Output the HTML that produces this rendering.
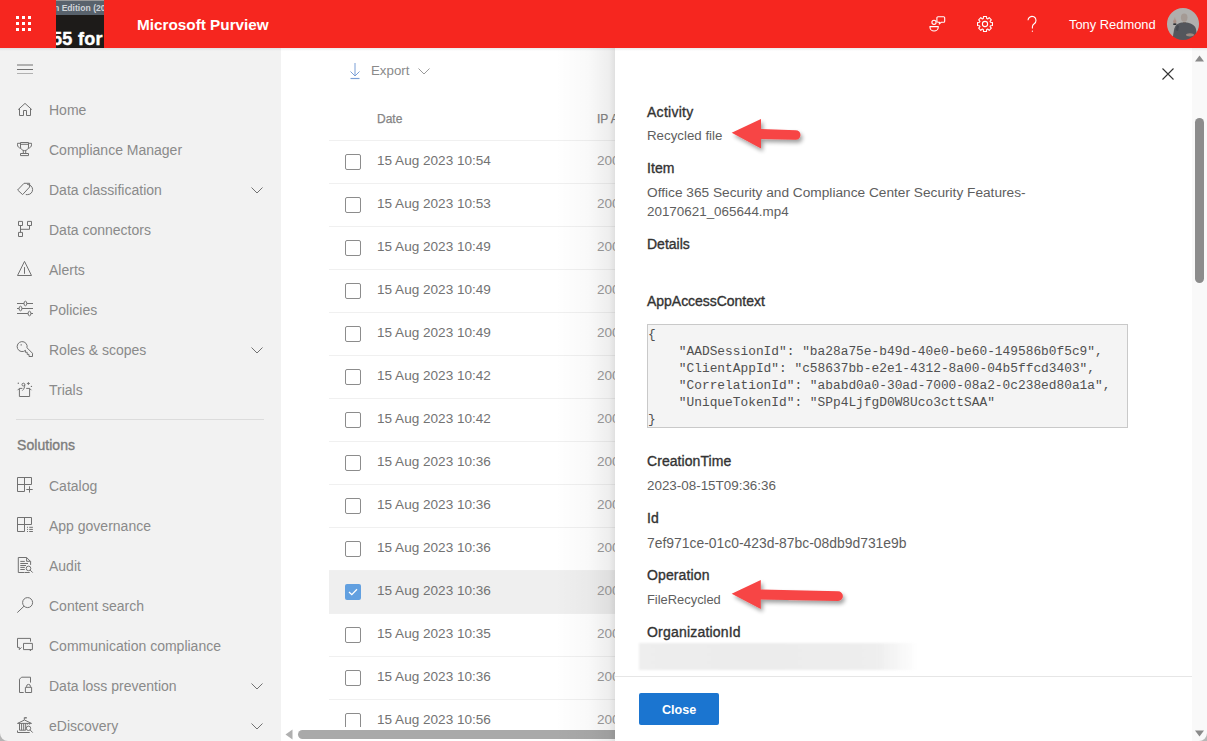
<!DOCTYPE html>
<html><head><meta charset="utf-8">
<style>
*{box-sizing:border-box;margin:0;padding:0}
html,body{width:1207px;height:741px;overflow:hidden;background:#fff;font-family:"Liberation Sans",sans-serif}
.abs{position:absolute}
#hdr{position:absolute;left:0;top:0;width:1207px;height:48px;background:#f6261f}
#side{position:absolute;left:0;top:48px;width:281px;height:693px;background:#f2f2f2}
.nav{position:absolute;left:49px;font-size:14px;color:#8a8a8a;white-space:nowrap;line-height:16px}
.nicon{position:absolute;left:17px;width:16px;height:16px}
.chev{position:absolute;left:250px;width:14px;height:14px}
#main{position:absolute;left:281px;top:48px;width:334px;height:693px;background:#fff;overflow:hidden}
.row{position:absolute;left:48px;width:400px;height:43px;border-top:1px solid #f1f1f1}
.cb{position:absolute;left:16px;top:13px;width:16px;height:16px;border:1px solid #8f8f8f;border-radius:2px}
.dt{position:absolute;left:48px;top:12px;font-size:13.7px;color:#7a7a7a;white-space:nowrap}
.ip{position:absolute;left:268px;top:13px;font-size:13px;color:#9a9a9a;white-space:nowrap}
#panel{position:absolute;left:615px;top:48px;width:592px;height:693px;background:#fff}
#shadow{position:absolute;left:555px;top:48px;width:60px;height:693px;background:linear-gradient(to right,rgba(0,0,0,0),rgba(0,0,0,0.025) 55%,rgba(0,0,0,0.065) 90%,rgba(0,0,0,0.12))}
.lbl{position:absolute;left:32px;font-size:14px;font-weight:bold;color:#333;white-space:nowrap}
.val{position:absolute;left:32px;font-size:13.7px;color:#555;white-space:nowrap;line-height:19px}
</style></head><body>
<div id="hdr">
 <svg class="abs" style="left:16px;top:16px" width="16" height="16" viewBox="0 0 16 16" fill="#fff">
  <rect x="0" y="0" width="3" height="3"/><rect x="6" y="0" width="3" height="3"/><rect x="12" y="0" width="3" height="3"/>
  <rect x="0" y="6" width="3" height="3"/><rect x="6" y="6" width="3" height="3"/><rect x="12" y="6" width="3" height="3"/>
  <rect x="0" y="12" width="3" height="3"/><rect x="6" y="12" width="3" height="3"/><rect x="12" y="12" width="3" height="3"/>
 </svg>
 <div class="abs" style="left:56px;top:0;width:48px;height:48px;background:#1d1b19;overflow:hidden">
  <div class="abs" style="left:0;top:0;width:48px;height:15px;background:#58626c;border-top:1px solid #9a9a9a"></div>
  <div class="abs" style="left:-2px;top:2px;font-size:8.6px;font-weight:bold;color:#d0d4d8;white-space:nowrap;line-height:13px">n Edition (20</div>
  <div class="abs" style="left:-4px;top:29px;font-size:18px;font-weight:bold;color:#fff;-webkit-text-stroke:0.4px #fff;letter-spacing:0.3px;white-space:nowrap;line-height:20px">55 for</div>
 </div>
 <div class="abs" style="left:137px;top:15px;font-size:15.3px;font-weight:bold;color:#fff;white-space:nowrap;line-height:20px">Microsoft Purview</div>
 <svg class="abs" style="left:928px;top:15px;overflow:visible" width="18" height="18" viewBox="0 0 18 18" fill="none" stroke="#fff" stroke-width="1.1">
  <circle cx="6" cy="7.3" r="2.1"/>
  <path d="M2 11.6 H10.2 V12.4 A4.1 3.6 0 0 1 2 12.4 Z"/>
  <path d="M10 1.7 H15.6 A1.1 1.1 0 0 1 16.7 2.8 V6.2 A1.1 1.1 0 0 1 15.6 7.3 H13.2 L11.4 8.8 V7.3 H10 A1.1 1.1 0 0 1 8.9 6.2 V2.8 A1.1 1.1 0 0 1 10 1.7 Z"/>
 </svg>
 <svg class="abs" style="left:975.7px;top:15.1px;overflow:visible" width="18" height="18" viewBox="0 0 18 18" fill="none" stroke="#fff" stroke-width="1.1" stroke-linejoin="round">
  <path d="M7.32 3.55 L7.49 1.55 L10.51 1.55 L10.68 3.55 L11.66 3.96 L13.20 2.67 L15.33 4.80 L14.04 6.34 L14.45 7.32 L16.45 7.49 L16.45 10.51 L14.45 10.68 L14.04 11.66 L15.33 13.20 L13.20 15.33 L11.66 14.04 L10.68 14.45 L10.51 16.45 L7.49 16.45 L7.32 14.45 L6.34 14.04 L4.80 15.33 L2.67 13.20 L3.96 11.66 L3.55 10.68 L1.55 10.51 L1.55 7.49 L3.55 7.32 L3.96 6.34 L2.67 4.80 L4.80 2.67 L6.34 3.96Z"/>
  <circle cx="9" cy="9" r="2.6"/>
 </svg>
 <svg class="abs" style="left:1025px;top:15px" width="14" height="18" viewBox="0 0 14 18" fill="none" stroke="#fff" stroke-width="1.1">
  <path d="M3 5.3 A4 4 0 1 1 9.2 8.7 C8 9.5 7.4 10.4 7.4 11.8 V13.5"/>
  <circle cx="7.4" cy="16.2" r="0.65" fill="#fff" stroke="none"/>
 </svg>
 <div class="abs" style="left:1069px;top:16px;font-size:12.9px;color:#fff;white-space:nowrap;line-height:18px">Tony Redmond</div>
 <svg class="abs" style="left:1167px;top:8px" width="32" height="32" viewBox="0 0 32 32">
  <defs><clipPath id="av"><circle cx="16" cy="16" r="16"/></clipPath>
  <filter id="avb"><feGaussianBlur stdDeviation="0.5"/></filter></defs>
  <g clip-path="url(#av)"><g filter="url(#avb)">
   <rect x="-2" y="-2" width="36" height="36" fill="#b0afad"/>
   <ellipse cx="17.2" cy="9.6" rx="3.3" ry="4.2" fill="#a49a94"/>
   <path d="M16 14 L19 14 L19 16 L16 16z" fill="#8c7a70"/>
   <path d="M5 34 L7 22 C8 17 11 15 15 14.5 L19.5 14.5 C24 15 27.5 17 29 21 L31 34 Z" fill="#53565b"/>
   <path d="M10 17 L8.5 22 L11 23 L12 18z" fill="#454850"/>
   <ellipse cx="7.8" cy="13.6" rx="1.6" ry="2.4" fill="#a89086"/>
   <rect x="7.3" y="9.6" width="1" height="3" fill="#b09a8e"/>
   <rect x="6.3" y="15.4" width="3" height="1.6" fill="#2e3034"/>
   <ellipse cx="23" cy="26.8" rx="4" ry="1.6" fill="#9a8a82"/>
  </g></g>
 </svg>
</div>
<div id="side">
<svg class="abs" style="left:17px;top:16px" width="16" height="10" viewBox="0 0 16 10" stroke="#717171" stroke-width="1"><path d="M0 1H16M0 5.5H16M0 10H16"/></svg>
<svg class="nicon" style="top:54px;overflow:visible" viewBox="0 0 16 16" fill="none" stroke="#717171" stroke-width="1"><path d="M1.2 7.6 L8 1.4 L14.8 7.6 M2.5 6.6 V13.5 H6.5 V8.5 H9.5 V13.5 H13.5 V6.6"/></svg>
<div class="nav" style="top:54px">Home</div>
<svg class="nicon" style="top:94px;overflow:visible" viewBox="0 0 16 16" fill="none" stroke="#717171" stroke-width="1"><path d="M3.5 0.5 H11.5 V5 C11.5 7 9.7 8.6 7.5 8.6 C5.3 8.6 3.5 7 3.5 5 Z M3.5 2.3 H11.5"/><path d="M3.5 1.3 H0.5 V2.8 C0.5 4.6 1.8 6 3.9 6.3 M11.5 1.3 H14.5 V2.8 C14.5 4.6 13.2 6 11.1 6.3"/><path d="M6.3 8.6 V11.4 M8.7 8.6 V11.4 M3.5 11.5 H11.5 V13.6 H3.5 Z"/></svg>
<div class="nav" style="top:94px">Compliance Manager</div>
<svg class="nicon" style="top:134px;overflow:visible" viewBox="0 0 16 16" fill="none" stroke="#717171" stroke-width="1"><path d="M0.6 8 L7 1.3 H12.6 V5 L5.6 12.6 Z" stroke-linejoin="miter"/><path d="M10.2 2.4 C13.6 2.6 15.6 5 15.6 7.6 C15.6 10.4 13.4 12.6 10.6 12.6 H8.8"/></svg>
<div class="nav" style="top:134px">Data classification</div>
<svg class="chev" style="top:135px" viewBox="0 0 14 14" fill="none" stroke="#717171" stroke-width="1"><path d="M1.5 4.5 L7 10 L12.5 4.5"/></svg>
<svg class="nicon" style="top:174px;overflow:visible" viewBox="0 0 16 16" fill="none" stroke="#717171" stroke-width="1"><path d="M1.5 -0.6 H5.5 V3.5 H1.5 Z M10.5 -0.6 H14.5 V3.5 H10.5 Z M1.5 10.4 H5.5 V14.5 H1.5 Z M3.5 3.5 V10.4 M3.5 7.3 H12.5 V3.5"/></svg>
<div class="nav" style="top:174px">Data connectors</div>
<svg class="nicon" style="top:214px;overflow:visible" viewBox="0 0 16 16" fill="none" stroke="#717171" stroke-width="1"><path d="M7.5 -0.6 L14.5 13.5 H0.5 Z" stroke-linejoin="miter"/><path d="M7.5 5.1 V11.8"/></svg>
<div class="nav" style="top:214px">Alerts</div>
<svg class="nicon" style="top:254px;overflow:visible" viewBox="0 0 16 16" fill="none" stroke="#717171" stroke-width="1"><path d="M0 1.5 H16 M0 6.5 H16 M0 11.5 H16"/><ellipse cx="8.4" cy="1.5" rx="1.4" ry="2.3" fill="#f2f2f2"/><ellipse cx="3.5" cy="6.5" rx="1.4" ry="2.3" fill="#f2f2f2"/><ellipse cx="12.5" cy="11.5" rx="1.4" ry="2.3" fill="#f2f2f2"/></svg>
<div class="nav" style="top:254px">Policies</div>
<svg class="nicon" style="top:294px;overflow:visible" viewBox="0 0 16 16" fill="none" stroke="#717171" stroke-width="1"><path d="M8.5 8.3 A5 5 0 1 1 10 5.8 L15.5 11.3 V14.5 H12 V12.4 H10.2 V10.3 H8.4 Z" stroke-linejoin="miter"/><rect x="3.6" y="2.3" width="1.2" height="1.2" fill="#717171" stroke="none"/></svg>
<div class="nav" style="top:294px">Roles &amp; scopes</div>
<svg class="chev" style="top:295px" viewBox="0 0 14 14" fill="none" stroke="#717171" stroke-width="1"><path d="M1.5 4.5 L7 10 L12.5 4.5"/></svg>
<svg class="nicon" style="top:334px;overflow:visible" viewBox="0 0 16 16" fill="none" stroke="#717171" stroke-width="1"><path d="M2.4 14.5 V6.4 H5.4 M9.2 6.4 H12.6 V14.5 H2.4 M2.4 6.4 L0.6 8.2 M12.6 6.4 L14.4 8.2"/><circle cx="6.4" cy="2.6" r="1.4"/><path d="M7.8 2.6 C7.8 5 7 7.3 5.3 8.6"/><circle cx="1.3" cy="1.3" r="0.7" fill="#717171" stroke="none"/><circle cx="14.4" cy="4.4" r="0.7" fill="#717171" stroke="none"/><path d="M11.4 0 V3 M9.9 1.5 H12.9" stroke-width="0.9"/></svg>
<div class="nav" style="top:334px">Trials</div>
<svg class="nicon" style="top:430px;overflow:visible" viewBox="0 0 16 16" fill="none" stroke="#717171" stroke-width="1"><path d="M0.5 -0.5 H14.5 V6.5 M0.5 -0.5 V13.5 H7.5 V-0.5 M0.5 6.5 H14.5 M12.5 8.3 V14.6 M9.3 11.5 H15.7"/></svg>
<div class="nav" style="top:430px">Catalog</div>
<svg class="nicon" style="top:470px;overflow:visible" viewBox="0 0 16 16" fill="none" stroke="#717171" stroke-width="1"><path d="M0.5 -0.5 H14.5 V6.5 M0.5 -0.5 V13.5 H7.5 V-0.5 M0.5 6.5 H14.5 M12.2 9.3 H15.9 M12.2 11.4 H15.9 M12.2 13.5 H15.9"/><rect x="10" y="8.8" width="1" height="1" fill="#717171" stroke="none"/><rect x="10" y="10.9" width="1" height="1" fill="#717171" stroke="none"/><rect x="10" y="13" width="1" height="1" fill="#717171" stroke="none"/></svg>
<div class="nav" style="top:470px">App governance</div>
<svg class="nicon" style="top:510px;overflow:visible" viewBox="0 0 16 16" fill="none" stroke="#717171" stroke-width="1"><path d="M7.5 14.5 H1.3 V-0.5 H9.6 L13.6 3.5 V6.9 M9.6 -0.5 V3.3 H13.6 M3.3 3.4 H7.8 M3.3 5.5 H11 M3.3 7.5 H9 M3.3 9.4 H7.8 M3.3 11.5 H7.8 M7.8 14.5 H12.7"/><circle cx="11.5" cy="10.4" r="2.3"/><path d="M13.1 12 L15.7 14.6"/></svg>
<div class="nav" style="top:510px">Audit</div>
<svg class="nicon" style="top:550px;overflow:visible" viewBox="0 0 16 16" fill="none" stroke="#717171" stroke-width="1"><circle cx="10.6" cy="4.6" r="5"/><path d="M7 8.2 L0.3 14.6"/></svg>
<div class="nav" style="top:550px">Content search</div>
<svg class="nicon" style="top:590px;overflow:visible" viewBox="0 0 16 16" fill="none" stroke="#717171" stroke-width="1"><path d="M13.5 3.6 V0.4 H0.5 V9.4 H2.3 V11.6 L4.5 9.4 M6.5 5.4 H15.4 V11.6 H6.5 Z M12.5 11.6 L13.5 12.8 V11.6"/></svg>
<div class="nav" style="top:590px">Communication compliance</div>
<svg class="nicon" style="top:630px;overflow:visible" viewBox="0 0 16 16" fill="none" stroke="#717171" stroke-width="1"><path d="M6.7 14.5 H2.5 V1.2 L4.5 -0.8 H13.5 V4.6 M8.4 9.3 H14.6 V14.5 H8.4 Z M9.6 9.3 V8.3 A1.9 1.9 0 0 1 13.4 8.3 V9.3"/></svg>
<div class="nav" style="top:630px">Data loss prevention</div>
<svg class="chev" style="top:631px" viewBox="0 0 14 14" fill="none" stroke="#717171" stroke-width="1"><path d="M1.5 4.5 L7 10 L12.5 4.5"/></svg>
<svg class="nicon" style="top:670px;overflow:visible" viewBox="0 0 16 16" fill="none" stroke="#717171" stroke-width="1"><path d="M7.3 1.8 V-0.5 M0.5 5.4 L7.5 2 L14.5 5.4 Z M2.5 5.4 V12.2 M4.6 5.4 V12.2 M6.7 5.4 V12.2 M8.7 5.4 V12.2 M10.6 5.4 V6.6 M12.6 5.4 V6.6 M2.5 12.2 H8.7 M0.5 14.5 H12.7 M0.5 12.5 V14.5"/><rect x="7.4" y="-0.9" width="2.4" height="1.4" fill="#717171" stroke="none"/><circle cx="11.5" cy="10.3" r="2.2"/><path d="M13.1 11.9 L15.7 14.6"/></svg>
<div class="nav" style="top:670px">eDiscovery</div>
<svg class="chev" style="top:671px" viewBox="0 0 14 14" fill="none" stroke="#717171" stroke-width="1"><path d="M1.5 4.5 L7 10 L12.5 4.5"/></svg>
<div class="abs" style="left:16px;top:371px;width:248px;height:1px;background:#dcdcdc"></div>
<div class="abs" style="left:17px;top:389px;font-size:14px;letter-spacing:0.05px;color:#7c7c7c;-webkit-text-stroke:0.35px #7c7c7c;white-space:nowrap;line-height:16px">Solutions</div>
</div>
<div id="main">
<svg class="abs" style="left:68px;top:15px" width="12" height="17" viewBox="0 0 12 17" fill="none" stroke="#7a9fd6" stroke-width="1"><path d="M6 0 V13 M1.5 8.5 L6 13 L10.5 8.5"/><path d="M1.5 15.5 H10.5" stroke-width="1.2"/></svg>
<div class="abs" style="left:90px;top:15px;font-size:13.3px;color:#8a8a8a;white-space:nowrap;line-height:16px">Export</div>
<svg class="abs" style="left:137px;top:20px" width="12" height="7" viewBox="0 0 12 7" fill="none" stroke="#9a9a9a" stroke-width="1"><path d="M0.5 0.5 L6 6 L11.5 0.5"/></svg>
<div class="abs" style="left:96px;top:63px;font-size:12px;color:#858585;-webkit-text-stroke:0.25px #858585;white-space:nowrap;line-height:16px">Date</div>
<div class="abs" style="left:316px;top:63px;font-size:12px;color:#858585;-webkit-text-stroke:0.25px #858585;white-space:nowrap;line-height:16px">IP Address</div>
<div class="abs" style="left:0;top:0;width:334px;height:679px;overflow:hidden">
<div class="abs" style="left:48px;top:92px;width:300px;height:43px;border-top:1px solid #f0f0f0;">
<div class="abs" style="left:16px;top:13px;width:16px;height:16px;border:1px solid #8c8c8c;border-radius:2px"></div>
<div class="abs" style="left:48px;top:10.5px;font-size:13.57px;color:#737373;white-space:nowrap;line-height:18px">15 Aug 2023 10:54</div>
<div class="abs" style="left:268px;top:10.5px;font-size:13.57px;color:#9c9c9c;white-space:nowrap;line-height:18px">2001:0db8</div>
</div>
<div class="abs" style="left:48px;top:135px;width:300px;height:43px;border-top:1px solid #f0f0f0;">
<div class="abs" style="left:16px;top:13px;width:16px;height:16px;border:1px solid #8c8c8c;border-radius:2px"></div>
<div class="abs" style="left:48px;top:10.5px;font-size:13.57px;color:#737373;white-space:nowrap;line-height:18px">15 Aug 2023 10:53</div>
<div class="abs" style="left:268px;top:10.5px;font-size:13.57px;color:#9c9c9c;white-space:nowrap;line-height:18px">2001:0db8</div>
</div>
<div class="abs" style="left:48px;top:178px;width:300px;height:43px;border-top:1px solid #f0f0f0;">
<div class="abs" style="left:16px;top:13px;width:16px;height:16px;border:1px solid #8c8c8c;border-radius:2px"></div>
<div class="abs" style="left:48px;top:10.5px;font-size:13.57px;color:#737373;white-space:nowrap;line-height:18px">15 Aug 2023 10:49</div>
<div class="abs" style="left:268px;top:10.5px;font-size:13.57px;color:#9c9c9c;white-space:nowrap;line-height:18px">2001:0db8</div>
</div>
<div class="abs" style="left:48px;top:221px;width:300px;height:43px;border-top:1px solid #f0f0f0;">
<div class="abs" style="left:16px;top:13px;width:16px;height:16px;border:1px solid #8c8c8c;border-radius:2px"></div>
<div class="abs" style="left:48px;top:10.5px;font-size:13.57px;color:#737373;white-space:nowrap;line-height:18px">15 Aug 2023 10:49</div>
<div class="abs" style="left:268px;top:10.5px;font-size:13.57px;color:#9c9c9c;white-space:nowrap;line-height:18px">2001:0db8</div>
</div>
<div class="abs" style="left:48px;top:264px;width:300px;height:43px;border-top:1px solid #f0f0f0;">
<div class="abs" style="left:16px;top:13px;width:16px;height:16px;border:1px solid #8c8c8c;border-radius:2px"></div>
<div class="abs" style="left:48px;top:10.5px;font-size:13.57px;color:#737373;white-space:nowrap;line-height:18px">15 Aug 2023 10:49</div>
<div class="abs" style="left:268px;top:10.5px;font-size:13.57px;color:#9c9c9c;white-space:nowrap;line-height:18px">2001:0db8</div>
</div>
<div class="abs" style="left:48px;top:307px;width:300px;height:43px;border-top:1px solid #f0f0f0;">
<div class="abs" style="left:16px;top:13px;width:16px;height:16px;border:1px solid #8c8c8c;border-radius:2px"></div>
<div class="abs" style="left:48px;top:10.5px;font-size:13.57px;color:#737373;white-space:nowrap;line-height:18px">15 Aug 2023 10:42</div>
<div class="abs" style="left:268px;top:10.5px;font-size:13.57px;color:#9c9c9c;white-space:nowrap;line-height:18px">2001:0db8</div>
</div>
<div class="abs" style="left:48px;top:350px;width:300px;height:43px;border-top:1px solid #f0f0f0;">
<div class="abs" style="left:16px;top:13px;width:16px;height:16px;border:1px solid #8c8c8c;border-radius:2px"></div>
<div class="abs" style="left:48px;top:10.5px;font-size:13.57px;color:#737373;white-space:nowrap;line-height:18px">15 Aug 2023 10:42</div>
<div class="abs" style="left:268px;top:10.5px;font-size:13.57px;color:#9c9c9c;white-space:nowrap;line-height:18px">2001:0db8</div>
</div>
<div class="abs" style="left:48px;top:393px;width:300px;height:43px;border-top:1px solid #f0f0f0;">
<div class="abs" style="left:16px;top:13px;width:16px;height:16px;border:1px solid #8c8c8c;border-radius:2px"></div>
<div class="abs" style="left:48px;top:10.5px;font-size:13.57px;color:#737373;white-space:nowrap;line-height:18px">15 Aug 2023 10:36</div>
<div class="abs" style="left:268px;top:10.5px;font-size:13.57px;color:#9c9c9c;white-space:nowrap;line-height:18px">2001:0db8</div>
</div>
<div class="abs" style="left:48px;top:436px;width:300px;height:43px;border-top:1px solid #f0f0f0;">
<div class="abs" style="left:16px;top:13px;width:16px;height:16px;border:1px solid #8c8c8c;border-radius:2px"></div>
<div class="abs" style="left:48px;top:10.5px;font-size:13.57px;color:#737373;white-space:nowrap;line-height:18px">15 Aug 2023 10:36</div>
<div class="abs" style="left:268px;top:10.5px;font-size:13.57px;color:#9c9c9c;white-space:nowrap;line-height:18px">2001:0db8</div>
</div>
<div class="abs" style="left:48px;top:479px;width:300px;height:43px;border-top:1px solid #f0f0f0;">
<div class="abs" style="left:16px;top:13px;width:16px;height:16px;border:1px solid #8c8c8c;border-radius:2px"></div>
<div class="abs" style="left:48px;top:10.5px;font-size:13.57px;color:#737373;white-space:nowrap;line-height:18px">15 Aug 2023 10:36</div>
<div class="abs" style="left:268px;top:10.5px;font-size:13.57px;color:#9c9c9c;white-space:nowrap;line-height:18px">2001:0db8</div>
</div>
<div class="abs" style="left:48px;top:522px;width:300px;height:43px;border-top:1px solid #f0f0f0;background:#efefef;">
<div class="abs" style="left:16px;top:13px;width:16px;height:16px;background:#62a0e0;border-radius:2px"><svg class="abs" style="left:3px;top:4px" width="10" height="8" viewBox="0 0 10 8" fill="none" stroke="#fff" stroke-width="1.3"><path d="M1 4 L3.8 6.7 L9 1.3"/></svg></div>
<div class="abs" style="left:48px;top:10.5px;font-size:13.57px;color:#737373;white-space:nowrap;line-height:18px">15 Aug 2023 10:36</div>
<div class="abs" style="left:268px;top:10.5px;font-size:13.57px;color:#9c9c9c;white-space:nowrap;line-height:18px">2001:0db8</div>
</div>
<div class="abs" style="left:48px;top:565px;width:300px;height:43px;border-top:1px solid #f0f0f0;">
<div class="abs" style="left:16px;top:13px;width:16px;height:16px;border:1px solid #8c8c8c;border-radius:2px"></div>
<div class="abs" style="left:48px;top:10.5px;font-size:13.57px;color:#737373;white-space:nowrap;line-height:18px">15 Aug 2023 10:35</div>
<div class="abs" style="left:268px;top:10.5px;font-size:13.57px;color:#9c9c9c;white-space:nowrap;line-height:18px">2001:0db8</div>
</div>
<div class="abs" style="left:48px;top:608px;width:300px;height:43px;border-top:1px solid #f0f0f0;">
<div class="abs" style="left:16px;top:13px;width:16px;height:16px;border:1px solid #8c8c8c;border-radius:2px"></div>
<div class="abs" style="left:48px;top:10.5px;font-size:13.57px;color:#737373;white-space:nowrap;line-height:18px">15 Aug 2023 10:36</div>
<div class="abs" style="left:268px;top:10.5px;font-size:13.57px;color:#9c9c9c;white-space:nowrap;line-height:18px">2001:0db8</div>
</div>
<div class="abs" style="left:48px;top:651px;width:300px;height:43px;border-top:1px solid #f0f0f0;">
<div class="abs" style="left:16px;top:13px;width:16px;height:16px;border:1px solid #8c8c8c;border-radius:2px"></div>
<div class="abs" style="left:48px;top:10.5px;font-size:13.57px;color:#737373;white-space:nowrap;line-height:18px">15 Aug 2023 10:56</div>
<div class="abs" style="left:268px;top:10.5px;font-size:13.57px;color:#9c9c9c;white-space:nowrap;line-height:18px">2001:0db8</div>
</div>
</div>
<svg class="abs" style="left:4px;top:681px" width="8" height="11" viewBox="0 0 8 11" fill="#b0b0b0"><path d="M7.5 0.5 V10.5 L0.5 5.5 Z"/></svg>
<div class="abs" style="left:17px;top:682px;width:330px;height:9px;background:#a9a9a9;border-radius:4.5px"></div>
</div>
<div id="shadow"></div>
<div id="panel">
<div class="abs" style="left:32px;top:53.55px;font-size:14px;line-height:20px;letter-spacing:0.27px;color:#333333;-webkit-text-stroke:0.35px #333333;white-space:nowrap;">Activity</div>
<div class="abs" style="left:32px;top:78.09px;font-size:13.3px;line-height:20px;color:#5e5e5e;white-space:nowrap;">Recycled file</div>
<div class="abs" style="left:32px;top:109.95px;font-size:14px;line-height:20px;letter-spacing:0.1px;color:#333333;-webkit-text-stroke:0.35px #333333;white-space:nowrap;">Item</div>
<div class="abs" style="left:32px;top:134.95px;font-size:13.7px;line-height:20px;color:#5e5e5e;white-space:nowrap;">Office 365 Security and Compliance Center Security Features-</div>
<div class="abs" style="left:32px;top:153.65px;font-size:13.42px;line-height:20px;color:#5e5e5e;white-space:nowrap;">20170621_065644.mp4</div>
<div class="abs" style="left:32px;top:185.75px;font-size:14px;line-height:20px;letter-spacing:0px;color:#333333;-webkit-text-stroke:0.35px #333333;white-space:nowrap;">Details</div>
<div class="abs" style="left:32px;top:243.15px;font-size:14px;line-height:20px;letter-spacing:-0.03px;color:#333333;-webkit-text-stroke:0.35px #333333;white-space:nowrap;">AppAccessContext</div>
<div class="abs" style="left:32px;top:402.95px;font-size:14px;line-height:20px;letter-spacing:0.07px;color:#333333;-webkit-text-stroke:0.35px #333333;white-space:nowrap;">CreationTime</div>
<div class="abs" style="left:32px;top:427.89px;font-size:13.42px;line-height:20px;color:#5e5e5e;white-space:nowrap;">2023-08-15T09:36:36</div>
<div class="abs" style="left:32px;top:460.05px;font-size:14px;line-height:20px;letter-spacing:0.1px;color:#333333;-webkit-text-stroke:0.35px #333333;white-space:nowrap;">Id</div>
<div class="abs" style="left:32px;top:484.78px;font-size:13.9px;line-height:20px;color:#5e5e5e;white-space:nowrap;">7ef971ce-01c0-423d-87bc-08db9d731e9b</div>
<div class="abs" style="left:32px;top:517.15px;font-size:14px;line-height:20px;letter-spacing:0.12px;color:#333333;-webkit-text-stroke:0.35px #333333;white-space:nowrap;">Operation</div>
<div class="abs" style="left:32px;top:542.23px;font-size:12.9px;line-height:20px;color:#5e5e5e;white-space:nowrap;">FileRecycled</div>
<div class="abs" style="left:32px;top:573.65px;font-size:14px;line-height:20px;letter-spacing:0.2px;color:#333333;-webkit-text-stroke:0.35px #333333;white-space:nowrap;">OrganizationId</div>
<div class="abs" style="left:32px;top:276px;width:481px;height:104px;background:#f4f4f4;border:1px solid #c9c9c9"></div>
<pre class="abs" style="left:33px;top:277.8px;font-family:'Liberation Mono',monospace;font-size:12.85px;line-height:17px;color:#505050">{
    "AADSessionId": "ba28a75e-b49d-40e0-be60-149586b0f5c9",
    "ClientAppId": "c58637bb-e2e1-4312-8a00-04b5ffcd3403",
    "CorrelationId": "ababd0a0-30ad-7000-08a2-0c238ed80a1a",
    "UniqueTokenId": "SPp4LjfgD0W8Uco3cttSAA"
}</pre>
<div class="abs" style="left:24px;top:595px;width:280px;height:27px;background:linear-gradient(to right,#eeeeee 0%,#ececec 40%,#eeeeee 85%,rgba(238,238,238,0) 100%);filter:blur(1px)"></div>
<div class="abs" style="left:0;top:628px;width:577px;height:1px;background:#e6e6e6"></div>
<div class="abs" style="left:24px;top:645px;width:80px;height:32px;background:#1b75d0;border-radius:2px"></div>
<div class="abs" style="left:47px;top:651.63px;font-size:12.6px;line-height:20px;font-weight:bold;color:#ffffff;white-space:nowrap;">Close</div>
<svg class="abs" style="left:547px;top:20px" width="12" height="12" viewBox="0 0 12 12" stroke="#333" stroke-width="1.1"><path d="M0.5 0.5 L11.5 11.5 M11.5 0.5 L0.5 11.5"/></svg>
<div class="abs" style="left:577px;top:0;width:15px;height:693px;background:#f9f9f9"></div>
<svg class="abs" style="left:580px;top:7px" width="9" height="7" viewBox="0 0 9 7" fill="#8a8a8a"><path d="M4.5 0.5 L9 6.5 H0 Z"/></svg>
<div class="abs" style="left:580px;top:69.5px;width:9px;height:165px;background:#8c8c8c;border-radius:4.5px"></div>
<svg class="abs" style="left:580px;top:682px" width="9" height="7" viewBox="0 0 9 7" fill="#8a8a8a"><path d="M0 0.5 H9 L4.5 6.5 Z"/></svg>
</div>
<div class="abs" style="left:0;top:48px;width:1207px;height:3px;background:linear-gradient(to bottom,rgba(60,70,80,0.10),rgba(60,70,80,0))"></div>
<svg class="abs" style="left:0;top:0;overflow:visible" width="1207" height="741">
<defs><filter id="sh" x="-20%" y="-40%" width="150%" height="200%"><feGaussianBlur in="SourceAlpha" stdDeviation="2"/><feOffset dx="2" dy="3"/><feComponentTransfer><feFuncA type="linear" slope="0.38"/></feComponentTransfer><feMerge><feMergeNode/><feMergeNode in="SourceGraphic"/></feMerge></filter></defs>
<path filter="url(#sh)" fill="#f74545" d="M731.7 132.8 L761 119 L761 128.9 L795.7 130.2 A4.8 4.8 0 0 1 795.7 139.8 L761 139.1 L761 148.6 Z"/>
<path filter="url(#sh)" fill="#f74545" d="M731.7 593.7 L760.8 579.9 L760.8 589.4 L838 591.2 A4.9 4.9 0 0 1 838 601 L760.8 599.6 L760.8 609 Z"/>
</svg>
<svg class="abs" style="left:0;top:733px" width="8" height="8" viewBox="0 0 8 8"><path d="M0 0 A8 8 0 0 0 8 8 H0 Z" fill="#8c8c8c" opacity="0.6"/></svg>
<svg class="abs" style="left:1199px;top:733px" width="8" height="8" viewBox="0 0 8 8"><path d="M8 0 A8 8 0 0 1 0 8 H8 Z" fill="#8c8c8c" opacity="0.6"/></svg>
</body></html>
